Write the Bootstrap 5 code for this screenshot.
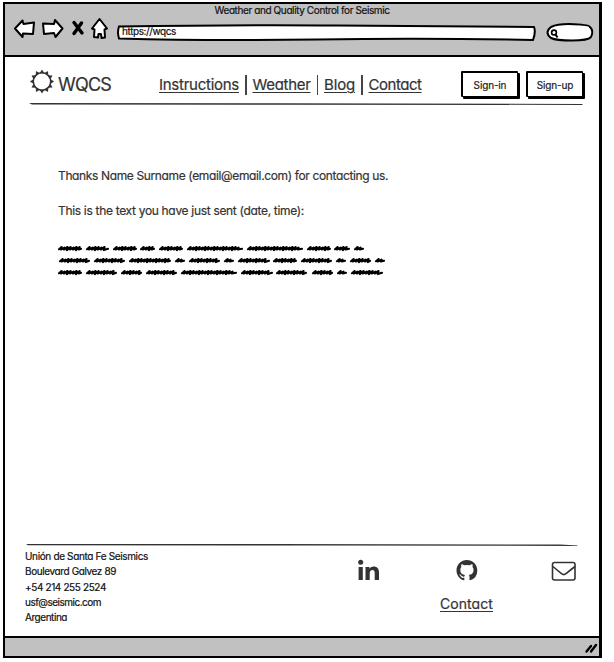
<!DOCTYPE html>
<html lang="en">
<head>
<meta charset="utf-8">
<meta name="viewport" content="width=device-width, initial-scale=1">
<title>Weather and Quality Control for Seismic</title>
<link href="https://cdn.jsdelivr.net/npm/bootstrap@5.3.0/dist/css/bootstrap.min.css" rel="stylesheet">
<style>
body{font-family:Inter,"Liberation Sans",sans-serif;font-feature-settings:"cv11" 1,"calt" 0;background:#fff;color:#333;overflow:hidden;-webkit-text-stroke:.2px currentColor}
svg{display:block;overflow:visible;flex:none}
.window{width:599px;height:656px;margin:2px 0 0 3px;border:2px solid #000;border-right-width:3px}
.chrome{height:53px;background:#c1c1c1;border-bottom:2px solid #000}
.chrome-title{height:15px;line-height:13px;font-size:10px;color:#111}
.toolbar-row{height:33px;padding-left:9px}
.address{width:419px;height:17px;margin:5px 0 0 8px}
.address-text{font-size:10px;line-height:15px;color:#111;padding-left:5px}
.search{margin:4px 0 0 8px}
.site-head{height:46px;padding:12px 16px 0 25px}
.brand-name{font-size:18px;line-height:27px;padding-top:2px}
.site-nav{font-size:15px;line-height:22px;margin:2px 0 0 48px;height:28px}
.site-nav a,.foot-contact{color:#333;text-decoration:underline;text-decoration-thickness:1px;text-underline-offset:2px}
.bar-sep{width:1.5px;height:20px;margin:0 6px;background:#444}
.sketch-btn{width:57px;height:26px;margin-top:2px;border:2px solid #000;border-right-width:1px;border-bottom-width:1px;border-radius:1px;background:#fff;color:#222;font-size:10px;line-height:20px;padding:1px 0 0;box-shadow:2px 2px 0 #000;letter-spacing:-.15px}
.message{height:438px;padding:61px 0 0 53px;font-size:12px}
.message p{line-height:18px;margin-bottom:17px}
.scribble-box{margin-top:22px}
.site-foot{height:92px;padding-left:20px}
.postal{font-size:10px;color:#111;line-height:15.3px;width:300px;padding-top:3px}
.foot-contact{font-size:14px;line-height:20px}
.foot-links{margin:-3px 0 0 115px}
.statusbar{height:20px;background:#c1c1c1;border-top:2px solid #000}
</style>
</head>
<body>
<div class="window d-flex flex-column">
  <header class="chrome flex-shrink-0">
    <div class="chrome-title text-center"><span id="title">Weather and Quality Control for Seismic</span></div>
    <div class="toolbar-row d-flex">
      <svg width="95" height="26" viewBox="14 19 95 26" fill="#fff" stroke="#000" stroke-width="2" stroke-linejoin="round" stroke-linecap="round">
        <path d="M15 28.5 22.5 20.5 23.5 24 34 22.5 33 34 23 33.5 22.5 37Z"/>
        <path d="M62.5 28.5 55 20 54 24 43 23.5 44 34 54 33 55.5 37Z"/>
        <path d="M74 22.5 82 33M81.5 23 74 33.5" fill="none" stroke-width="3.4"/>
        <path d="M99.5 19 107 28.5 104.5 29.5 105 37.5 101.5 38 101 34 98.5 34 98 37.5 94 37 94.5 29.5 92 28.5Z"/>
      </svg>
      <div class="address position-relative">
        <svg class="position-absolute top-0 start-0" width="419" height="17" fill="#fff" stroke="#000" stroke-width="2"><path d="M2 2.5Q130 .5 220 1.5T417 3Q419 8 416 16Q310 14 200 15.5T2 14.5Q0 8 2 2.5Z"/></svg>
        <div class="address-text position-relative"><span id="url">https://wqcs</span></div>
      </div>
      <svg class="search" width="48" height="20" viewBox="544 22 48 20" stroke="#000" stroke-width="2" fill="none">
        <path d="M551 26Q558 22.500 574 23.200T590 26Q594 30 591 36Q588 39.500 572 39.500T551 37Q544 31.500 551 26Z" fill="#fff"/>
        <circle cx="554" cy="31.500" r="2.400" stroke-width="1.700"/><path d="M555.500 33.500 557.500 36.500"/>
      </svg>
    </div>
  </header>

  <nav class="site-head d-flex align-items-start flex-shrink-0">
    <svg width="24" height="25" viewBox="0 0 24 25"><g id="sun" fill="#333"><circle cx="12" cy="12.500" r="8.700" fill="none" stroke="#333" stroke-width="1.500"/></g></svg>
    <span class="brand-name ms-1"><span id="brand">WQCS</span></span>
    <div class="site-nav d-flex align-items-center">
      <a href="#" id="n1">Instructions</a><span class="bar-sep"></span><a href="#" id="n2">Weather</a><span class="bar-sep"></span><a href="#" id="n3">Blog</a><span class="bar-sep"></span><a href="#" id="n4">Contact</a>
    </div>
    <div class="d-flex ms-auto gap-2">
      <button class="sketch-btn" type="button">Sign-in</button>
      <button class="sketch-btn" type="button">Sign-up</button>
    </div>
  </nav>
  <svg class="ms-4" width="554" height="3"><path d="M0 0 250 .2 554 1 553 1.900 260 1.800 3 1.500Z" fill="#333"/></svg>

  <main class="message flex-shrink-0">
    <p><span id="p1">Thanks Name Surname (email@email.com) for contacting us.</span></p>
    <p><span id="p2">This is the text you have just sent (date, time):</span></p>
    <svg class="scribble-box" width="330" height="36" viewBox="58 242 330 36"><path id="scribble" fill="none" stroke="#000" stroke-width="2.100" stroke-linecap="round" stroke-linejoin="round"/></svg>
  </main>

  <footer class="site-foot flex-shrink-0">
    <svg width="554" height="2"><path d="M1 0 250 0 535 .5 553 1.500 552 2 300 1.500 3 1.200Z" fill="#333"/></svg>
    <div class="d-flex">
      <div class="postal"><div><span id="f1">Unión de Santa Fe Seismics</span></div><div><span id="f2">Boulevard Galvez 89</span></div><div><span id="f3">+54 214 255 2524</span></div><div><span id="f4">usf@seismic.com</span></div><div><span id="f5">Argentina</span></div></div>
      <div>
        <svg width="254" height="48" viewBox="325 546 254 48" fill="#333">
          <circle cx="360.700" cy="562.200" r="2.500"/><path d="M358.600 567h4.200v13h-4.200zM365.500 567h4v1.800c1-1.500 2.400-2.200 4.200-2.200 3.200 0 5.300 2 5.300 6v7.400h-4.300v-6.700c0-2-.7-3.200-2.300-3.200-1.800 0-2.700 1.300-2.700 3.300v6.600h-4.200z"/>
          <g transform="translate(456.500 560) scale(1.300)"><path d="M8 0C3.580 0 0 3.580 0 8c0 3.540 2.290 6.530 5.470 7.590.4.070.55-.17.55-.38 0-.19-.01-.82-.01-1.490-2.010.37-2.530-.49-2.690-.94-.09-.23-.48-.94-.82-1.130-.28-.15-.68-.52-.01-.53.63-.01 1.080.58 1.230.82.72 1.210 1.870.87 2.330.66.07-.52.28-.87.51-1.070-1.780-.2-3.640-.89-3.640-3.950 0-.87.31-1.590.82-2.150-.08-.2-.36-1.020.08-2.120 0 0 .67-.21 2.200.82a7.600 7.600 0 0 1 4 0c1.530-1.040 2.200-.82 2.200-.82.44 1.100.16 1.920.08 2.120.51.56.82 1.270.82 2.150 0 3.070-1.870 3.750-3.650 3.950.29.25.54.73.54 1.480 0 1.070-.01 1.930-.01 2.200 0 .21.15.46.55.38A8 8 0 0 0 16 8c0-4.420-3.580-8-8-8z"/></g>
          <g fill="none" stroke="#333" stroke-width="1.600"><rect x="552.500" y="562.500" width="22.500" height="17.500" rx="2"/><path d="M553 566.500Q557 570 561.500 573.700Q563.800 575.500 566 573.700Q571 569.500 575 566.500"/></g>
        </svg>
        <div class="foot-links"><a href="#" class="foot-contact" id="fc">Contact</a></div>
      </div>
    </div>
  </footer>
  <div class="statusbar mt-auto d-flex justify-content-end flex-shrink-0">
    <svg width="14" height="18" viewBox="586 640 14 18"><path d="M587.500 653.500 592 648M592 653.500 597 647" stroke="#000" stroke-width="2.400" stroke-linecap="round"/></svg>
  </div>
</div>
<script src="https://cdn.jsdelivr.net/npm/bootstrap@5.3.0/dist/js/bootstrap.bundle.min.js"></script>
<script>
// Rendered width in pixels for each label; the tracking is spread over its letters.
const widths={title:175,url:54,brand:53,n1:80,n2:58,n3:31,n4:53,p1:330,p2:246,f1:123,f2:91,f3:81,f4:76,f5:42,fc:53};
for(const [id,w] of Object.entries(widths)){
  const el=document.getElementById(id);el.style.letterSpacing='0px';
  el.style.letterSpacing=((w-el.getBoundingClientRect().width)/el.textContent.length)+'px';
}
// Scribbled words: start and end of each stroke, by line.
const lines=[[248.5,[58,82,86,109,113,137,140,155,159,183,187,243,247,303,307,331,334,350,354,364]],
[260.5,[59,90,94,125,129,171,175,185,189,220,224,234,238,270,273,297,301,332,336,346,350,371,375,385]],
[272.5,[58,82,86,117,121,142,146,177,181,237,241,273,276,307,312,333,337,347,351,383]]];
let d='';
for(const [y,xs] of lines)for(let i=0;i<xs.length;i+=2){
  const a=xs[i]+1,b=xs[i+1]-1;
  d+=`M${a} ${y+.7}`;
  for(let x=a,k=0;x<b-3;x+=3,k++)d+=`L${x+2.6} ${y-(k%3==1?.9:1.5)}L${x+1.8} ${y+(k%3==2?1.6:1)}`;
  d+=`L${b} ${y+.3}`;
}
document.getElementById('scribble').setAttribute('d',d);
// Rays round the sun ring.
let rays='';
for(let i=0;i<12;i++)rays+=`<path d="M9.600 4.300 12 .4 14.400 4.300Z" transform="rotate(${i*30} 12 12.500)"/>`;
document.getElementById('sun').insertAdjacentHTML('beforeend',rays);
</script>
</body>
</html>
